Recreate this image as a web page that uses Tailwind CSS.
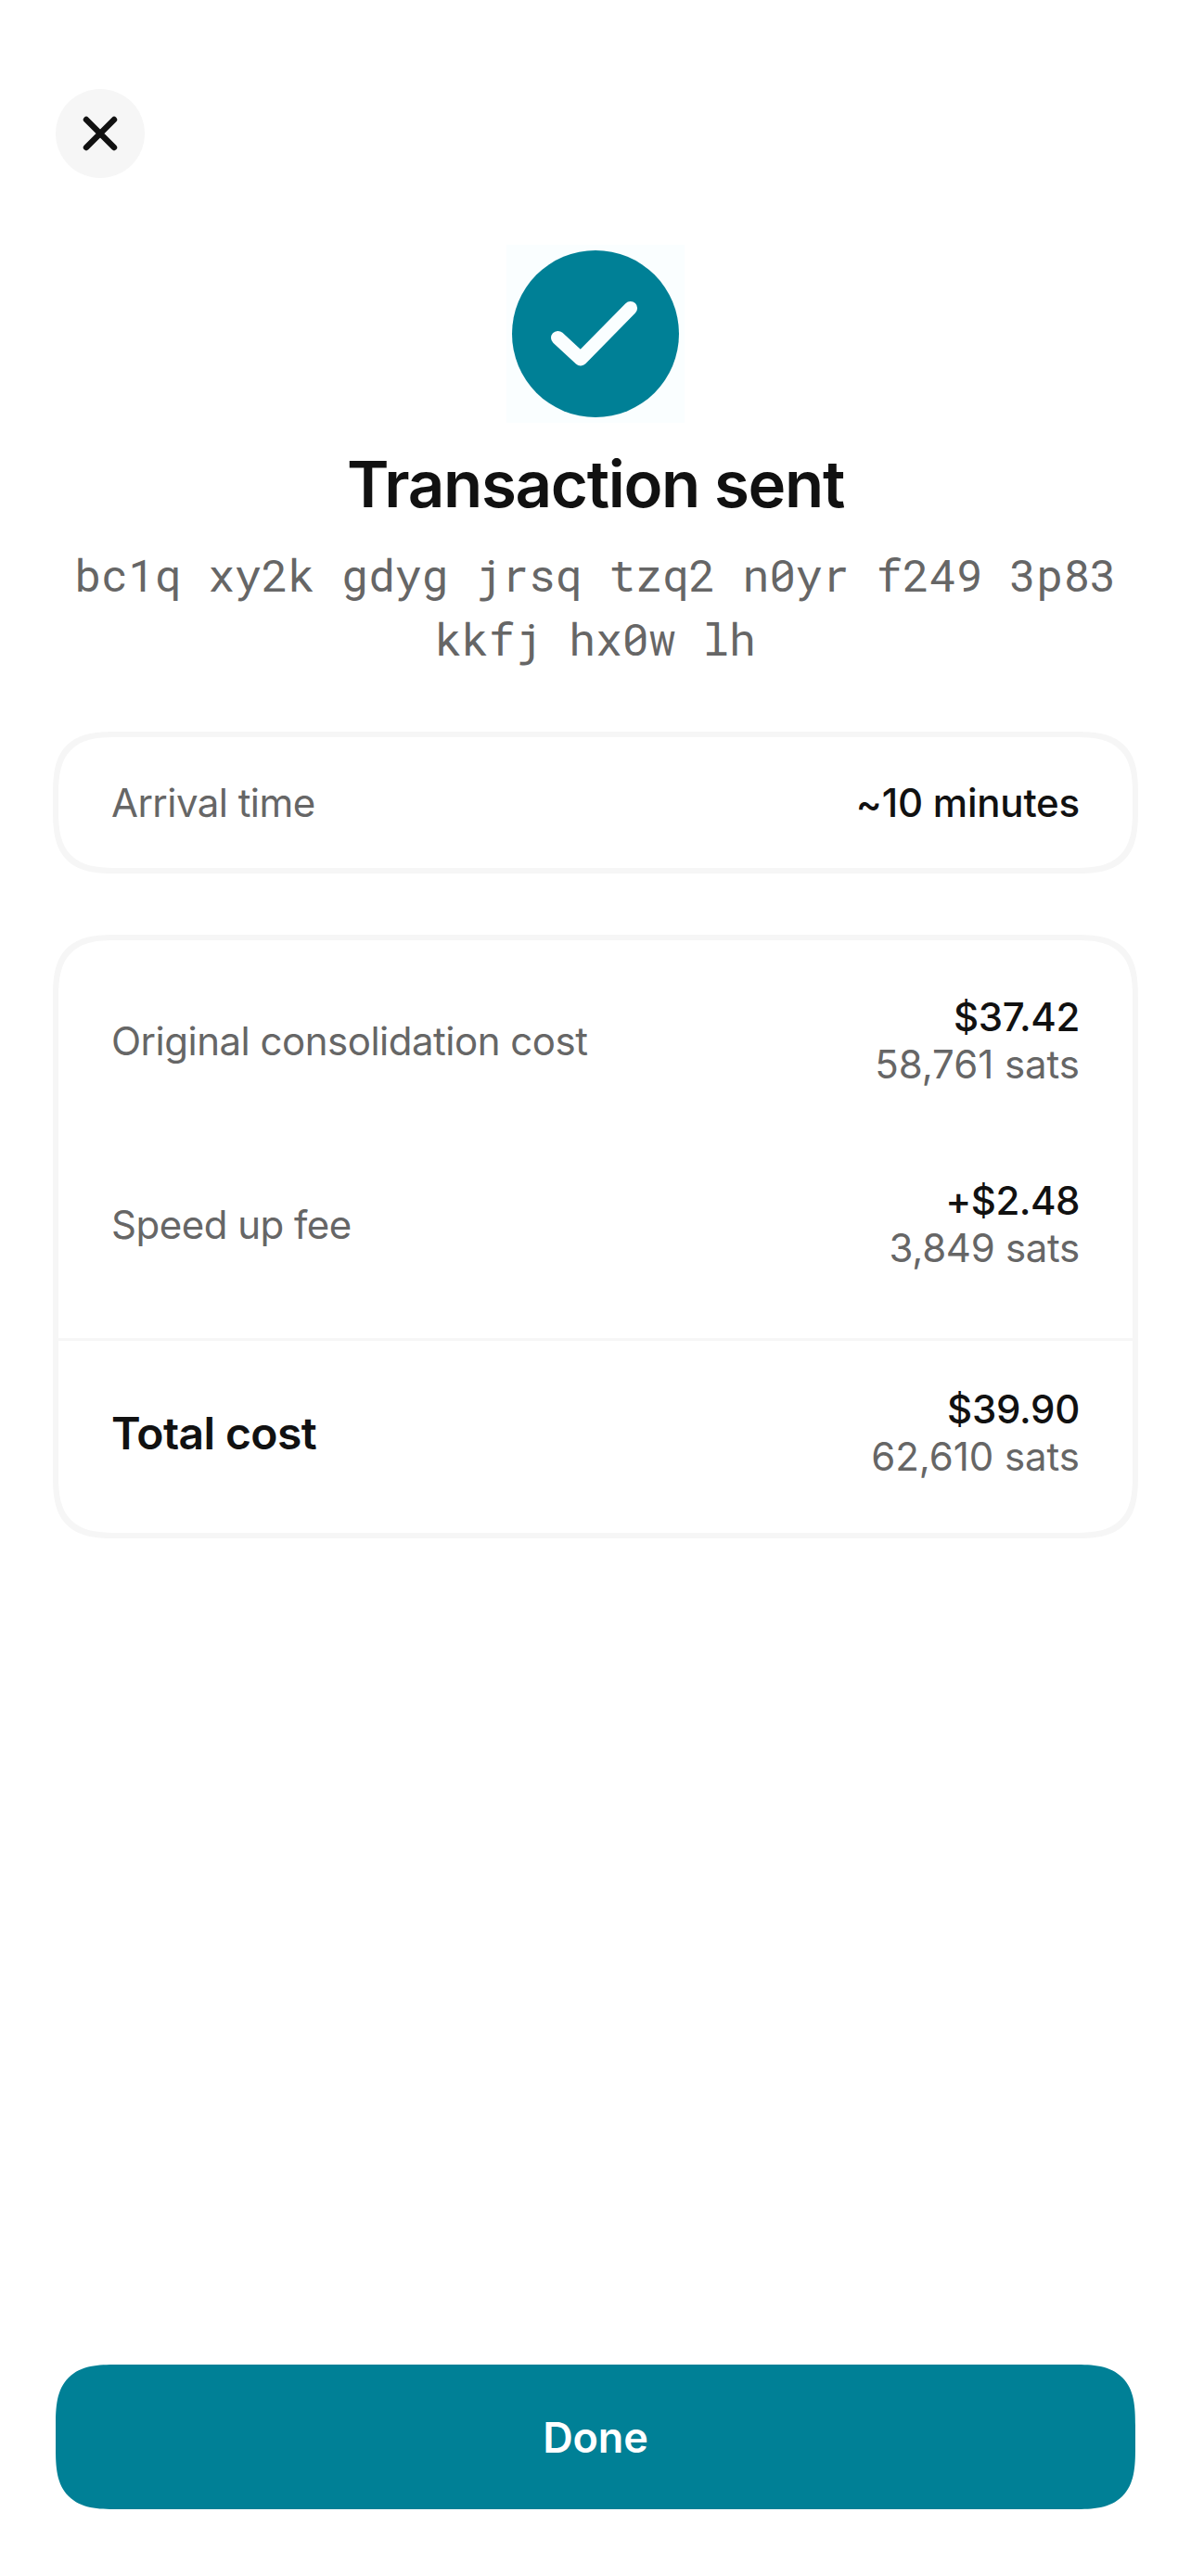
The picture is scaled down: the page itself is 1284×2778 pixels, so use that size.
<!DOCTYPE html>
<html lang="en">
<head>
<meta charset="utf-8">
<title>Transaction sent</title>
<script src="https://cdn.jsdelivr.net/npm/@tailwindcss/browser@4"></script>
</head>
<body class="bg-white">
<main class="flex h-[2778px] w-[1284px] flex-col bg-white px-[60px] pt-24 pb-[72px] font-[Inter,sans-serif] text-[#111111]">
  <button class="flex size-24 shrink-0 items-center justify-center rounded-full bg-[#f6f6f6]" aria-label="Close">
    <svg class="size-12" viewBox="0 0 48 48" fill="none" stroke="#111" stroke-width="6.4" stroke-linecap="round"><path d="M9 9 39 39M39 9 9 39"/></svg>
  </button>
  <div class="mx-auto mt-[72px] flex size-48 shrink-0 items-center justify-center bg-[#fafeff]">
    <svg class="size-[180px]" viewBox="0 0 180 180" fill="none"><circle cx="90" cy="90" r="90" fill="#008096"/><path d="M49.4 94.3 74 117 127.7 62.4" stroke="#fafeff" stroke-width="14.8" stroke-linecap="round" stroke-linejoin="round"/></svg>
  </div>
  <h1 class="mt-6 text-center text-[69px] leading-[84px] font-semibold tracking-[-1.33px] whitespace-nowrap">Transaction sent</h1>
  <p class="mt-[21px] text-center font-[Roboto_Mono,DejaVu_Sans_Mono,monospace] text-[48px] leading-[69px] whitespace-nowrap text-[#666666]">bc1q xy2k gdyg jrsq tzq2 n0yr f249 3p83<br>kkfj hx0w lh</p>

  <section class="-mx-[3px] mt-[66px] flex h-[153px] shrink-0 items-center justify-between rounded-[51px] border-[6px] border-[#f6f6f6] px-[57px] text-[42px] leading-[51px] supports-[corner-shape:squircle]:rounded-[70px] supports-[corner-shape:squircle]:[corner-shape:superellipse(1.54)]">
    <span class="font-[370] tracking-[-0.55px] text-[#666666]">Arrival time</span>
    <span class="font-medium tracking-[-0.2px]">~10 minutes</span>
  </section>

  <section class="-mx-[3px] mt-[66px] flex h-[651px] shrink-0 flex-col rounded-[51px] border-[6px] border-[#f6f6f6] text-[42px] leading-[51px] supports-[corner-shape:squircle]:rounded-[70px] supports-[corner-shape:squircle]:[corner-shape:superellipse(1.54)]">
    <div class="flex flex-col gap-24 px-[57px] pt-[57px] pb-[72px]">
      <div class="flex items-center justify-between">
        <span class="font-[370] tracking-[-0.5px] text-[#666666]">Original consolidation cost</span>
        <div class="flex flex-col items-end"><span class="font-medium tracking-[-0.4px]">$37.42</span><span class="font-[370] tracking-[-0.05px] text-[#666666]">58,761 sats</span></div>
      </div>
      <div class="flex items-center justify-between">
        <span class="font-[370] tracking-[-0.5px] text-[#666666]">Speed up fee</span>
        <div class="flex flex-col items-end"><span class="font-medium tracking-[-0.5px]">+$2.48</span><span class="font-[370] tracking-[-0.3px] text-[#666666]">3,849 sats</span></div>
      </div>
    </div>
    <div class="flex items-center justify-between border-t-[3px] border-[#f6f6f6] px-[57px] pt-12">
      <span class="text-[48px] font-semibold tracking-[-0.6px]">Total cost</span>
      <div class="flex flex-col items-end"><span class="font-medium tracking-[-0.3px]">$39.90</span><span class="font-[370] tracking-[-0.05px] text-[#666666]">62,610 sats</span></div>
    </div>
  </section>

  <button class="mt-auto flex h-[156px] shrink-0 items-center justify-center rounded-[48px] bg-[#008096] pt-[2px] text-[45px] leading-[54px] font-semibold tracking-[-0.1px] text-white supports-[corner-shape:squircle]:rounded-[66px] supports-[corner-shape:squircle]:[corner-shape:superellipse(1.54)]">Done</button>
</main>
</body>
</html>
